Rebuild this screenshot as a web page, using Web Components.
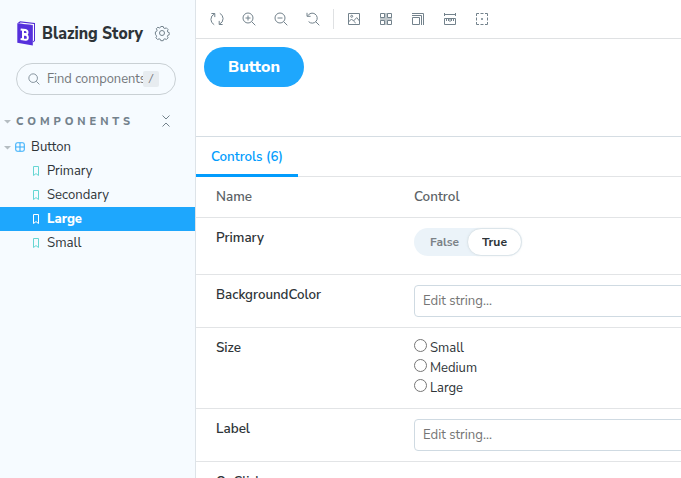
<!DOCTYPE html>
<html lang="en"><head><meta charset="utf-8"><title>Blazing Story</title>
<style>
html,body{margin:0;height:100%;overflow:hidden}
body{font:14px/20px "Nunito Sans",Nunito,Lato,"Open Sans",sans-serif;color:#2e3438;background:#fff}
</style></head><body><story-app></story-app>
<script>
const define=(name,html,setup)=>customElements.define(name,class extends HTMLElement{
  connectedCallback(){
    if(this.shadowRoot)return;
    const t=document.createElement('template');t.innerHTML=html;
    this.attachShadow({mode:'open'}).append(t.content.cloneNode(true));
    if(setup)setup(this,this.shadowRoot);
  }
});

/* Text run condensed or widened to a set width. */
define('fit-text','<style>:host{display:inline-block;white-space:nowrap}span{display:inline-block;transform-origin:0 50%}</style><span><slot></slot></span>',(el,root)=>{
  const s=root.querySelector('span'),w=+el.getAttribute('w');
  const k=w/s.getBoundingClientRect().width;
  el.style.width=w+'px';
  s.style.transform='scaleX('+k+')';
});

const icons={
  sync:'<path d="M4.6 1.8A6.2 6.2 0 0 0 .9 7.4Q1 11 4.2 12.7M9.4 12.2A6.2 6.2 0 0 0 13.1 6.6Q13 3 9.8 1.3M1.4 1.5h3.4v3.6M12.6 12.5H9.2V8.9"/>',
  zoomin:'<circle cx="6" cy="6" r="5"/><path d="M9.7 9.7l3.6 3.6M3.5 6h5M6 3.5v5"/>',
  zoomout:'<circle cx="6" cy="6" r="5"/><path d="M9.7 9.7l3.6 3.6M3.5 6h5"/>',
  reset:'<path d="M1.8 3.8A5 5 0 1 1 2.6 9.6M9.7 9.7l3.6 3.6M1 .8v3.5h3.6"/>',
  image:'<path d="M1.5 1.5h11v11h-11zM1.5 10l3-3 2 2 3.2-3.4L12.5 9M6.5 9l2.2 2"/><circle cx="4.7" cy="4.3" r="1"/>',
  grid:'<path d="M5 1h4v4h4v4H9v4H5V9H1V5h4z" fill="currentColor" opacity=".45" stroke="none"/><path d="M1.5 1.5h4v4h-4zM8.5 1.5h4v4h-4zM1.5 8.5h4v4h-4zM8.5 8.5h4v4h-4z"/>',
  sizes:'<path d="M1.5 5.5h7v7h-7zM1 3.5h9.5V13M1 1.5h11.5V13"/>',
  measure:'<path d="M1.5 1v3M12.5 1v3M1.5 2.5h11M1.5 6.5h11v6h-11zM3.5 7v2M5.5 7v2M7 7v3M8.5 7v2M10.5 7v2"/>',
  outline:'<path d="M1.5 4V1.5H4M5.5 1.5h3M10 1.5h2.5V4M12.5 5.5v3M12.5 10v2.5H10M8.5 12.5h-3M4 12.5H1.5V10M1.5 8.5v-3M6 7h2M7 6v2"/>',
  gear:'<path d="M5.8.5h2.4l.5 1.5 1.2.5 1.4-.7 1.8 1.8-.7 1.4.5 1.2 1.4.5v.8l-.1 1.3-1.3.4-.5 1.1.7 1.5-1.7 1.7-1.5-.7-1.2.5-.5 1.4H5.8l-.5-1.4-1.2-.5-1.5.7-1.7-1.7.7-1.5-.5-1.1L.4 8.2V5.9l1.2-.5.5-1.2-.8-1.5 1.6-1.5 1.4.8 1-.5z"/><circle cx="7" cy="7" r="2.5"/>',
  search:'<circle cx="6" cy="6" r="5"/><path d="M9.7 9.7l3.6 3.6"/>',
  collapse:'<path d="M3.5 1.5L7 5 10.5 1.5M3.5 12.5L7 9l3.5 3.5"/>',
  component:'<rect x="1" y="1" width="12" height="12" rx="2.5"/><path d="M7 1v12M1 7h12"/>',
  bookmark:'<path d="M4.5 2.5h5v9L7 9.6l-2.5 1.9z"/>',
  arrow:'<path d="M0 4h14L7 11z" fill="currentColor" stroke="none"/>'
};
define('ui-icon','<style>:host{display:block;width:14px;height:14px;flex:none;color:#73828c}svg{display:block;width:100%;height:100%;overflow:visible;fill:none;stroke:currentColor;stroke-width:var(--stroke,1)}</style><svg viewBox="0 0 14 14"></svg>',(el,root)=>{
  root.querySelector('svg').innerHTML=icons[el.getAttribute('name')];
});

define('brand-mark',`<style>:host{display:block;width:19px;height:25px}svg{display:block}</style>
<svg width="19" height="25" viewBox="0 0 19 25"><path fill="#512bd4" d="M.4 2.2L3 .3l15 1.6V20l-2.2 1.5V4.2z"/><path fill="#fff" d="M2.2 2.4l1.3-1L17 2.9v16.6l-1.1.9V4z"/><path fill="#5630dc" d="M.3 2.2L15.8 4.2v20.3L.3 21.8z"/><path fill="none" stroke="#fff" stroke-width="2" d="M3.6 8.4l4.9.7q2 .4 2 2.4 0 1.9-2 1.6l-2.3-.3M3.6 18.1l5 .7q2.2.2 2.2-2.2 0-2.3-2.2-2.8l-2.4-.4M6 8.8v9.5"/></svg>`);

define('tree-item',`<style>:host{display:flex;align-items:center;height:24px;padding-left:29px}ui-icon{margin-right:4px;color:#66d6d3}:host([selected]){background:#1ea7fd;color:#fff;font-weight:800}:host([selected]) ui-icon{color:#fff}</style><ui-icon name="bookmark"></ui-icon><slot></slot>`);

define('search-box',`<style>:host{display:flex;box-sizing:border-box;width:160px;height:32px;border:1px solid #c9d0d4;border-radius:16px;align-items:center;padding:0 15px 0 11px;color:#73777b}ui-icon{width:12px;height:12px;margin-right:7px}div{flex:none;width:96px;overflow:hidden;height:20px;line-height:20px}kbd{flex:none;box-sizing:border-box;width:16px;height:16px;background:#e7ecf0;border-radius:2px;text-align:center;font:italic 10px/16px "DejaVu Sans",sans-serif}</style><ui-icon name="search"></ui-icon><div><fit-text w="99">Find components</fit-text></div><kbd>/</kbd>`);

define('side-bar',`<style>
:host{display:block;box-sizing:border-box;width:196px;height:478px;background:#f6fbff;border-right:1px solid #dde3e8}
header{display:flex;align-items:center;height:25px;padding:21px 0 0 17px}
h1{font-size:17px;line-height:24px;font-weight:800;margin:0 12px 0 6px;width:101px}
header ui-icon{margin-bottom:1px}
search-box{margin:17px 0 0 16px}
.group{display:flex;align-items:center;height:24px;margin-top:14px;padding-left:4px;color:#73828c;font-size:11.5px;font-weight:800}
.arrow{width:7px;height:7px;color:#b5bdc2}
.group fit-text{margin-left:5px;letter-spacing:.36em}
.group .c{margin-left:25px}
.component{display:flex;align-items:center;height:24px;margin-top:2px;padding-left:4px}
.component .i{width:10px;height:10px;color:#37aefa;margin:0 6px 0 4px;--stroke:1.5}
</style>
<header><brand-mark></brand-mark><h1><fit-text w="101">Blazing Story</fit-text></h1><ui-icon name="gear"></ui-icon></header>
<search-box></search-box>
<div class="group"><ui-icon class="arrow" name="arrow"></ui-icon><fit-text w="118">COMPONENTS</fit-text><ui-icon class="c" name="collapse"></ui-icon></div>
<div class="component"><ui-icon class="arrow" name="arrow"></ui-icon><ui-icon class="i" name="component"></ui-icon><fit-text w="40">Button</fit-text></div>
<tree-item><fit-text w="45.5">Primary</fit-text></tree-item>
<tree-item><fit-text w="62">Secondary</fit-text></tree-item>
<tree-item selected><fit-text w="35">Large</fit-text></tree-item>
<tree-item><fit-text w="34.5">Small</fit-text></tree-item>`);

define('tool-bar',`<style>:host{display:flex;box-sizing:border-box;height:39px;border-bottom:1px solid #dfe1e3;align-items:center;padding-left:14px;gap:18px}i{width:1px;height:20px;background:#dfe1e3;margin:0 -5px}</style>
<ui-icon name="sync"></ui-icon><ui-icon name="zoomin"></ui-icon><ui-icon name="zoomout"></ui-icon><ui-icon name="reset"></ui-icon><i></i><ui-icon name="image"></ui-icon><ui-icon name="grid"></ui-icon><ui-icon name="sizes"></ui-icon><ui-icon name="measure"></ui-icon><ui-icon name="outline"></ui-icon>`);

define('story-button',`<style>:host{display:block}button{display:block;width:100px;height:40px;padding:0;border:0;border-radius:20px;background:#1ea7fd;color:#fff;font:800 16px/16px "Nunito Sans",Nunito,Lato,sans-serif}</style><button><slot></slot></button>`);

define('control-row',`<style>:host{display:grid;grid-template-columns:198px 1fr;box-sizing:border-box;height:var(--h);border-bottom:1px solid #e2e4e6;padding:10px 0 0 20px}.n{font-weight:650}:host([head]){color:#5c6367}:host([head]) div{font-weight:600}</style><div class="n"><slot name="name"></slot></div><div class="c"><slot></slot></div>`);

define('bool-switch',`<style>:host{display:flex;width:108px;height:28px;border-radius:14px;background:#ebf3f9;font-size:11.5px;line-height:28px;font-weight:700;color:#7b8287}.f{width:37px;padding-left:16px}.t{box-sizing:border-box;width:55px;height:28px;line-height:26px;border:1px solid #dce5ea;border-radius:14px;background:#fff;color:#2e3438;padding-left:14px;box-shadow:0 0 2px #cad6df66}</style><div class="f"><fit-text w="29">False</fit-text></div><div class="t"><fit-text w="25">True</fit-text></div>`);

define('text-field',`<style>:host{display:block;box-sizing:border-box;width:290px;height:32px;border:1px solid #cfdae2;border-radius:4px;padding:5px 8px;color:#757575}</style><fit-text w="69">Edit string...</fit-text>`);

define('radio-option',`<style>:host{display:flex;height:20px;align-items:flex-start}i{box-sizing:border-box;width:13px;height:13px;border:1px solid #767676;border-radius:50%;margin:1px 2.5px 0 0}</style><i></i><slot></slot>`);

define('tab-strip',`<style>:host{display:flex;box-sizing:border-box;height:41px;border-top:1px solid #d5dde3;box-shadow:inset 0 -1px #e2e4e6}div{box-sizing:border-box;width:102px;height:40px;border-bottom:3px solid #029cfd;color:#029cfd;font-weight:650;padding:10px 0 0 15px}</style><div><slot></slot></div>`);

define('story-app',`<style>:host{display:grid;grid-template-columns:196px 1fr;height:478px;overflow:hidden}main{min-width:0;height:478px;overflow:hidden}.canvas{height:97px;box-sizing:border-box;padding:8px}</style>
<side-bar></side-bar><main><tool-bar></tool-bar><section class="canvas"><story-button><fit-text w="52">Button</fit-text></story-button></section>
<tab-strip><fit-text w="72">Controls (6)</fit-text></tab-strip>
<control-row head style="--h:41px"><fit-text slot="name" w="36">Name</fit-text><fit-text w="45.5">Control</fit-text></control-row>
<control-row style="--h:57px"><fit-text slot="name" w="48">Primary</fit-text><bool-switch></bool-switch></control-row>
<control-row style="--h:53px"><fit-text slot="name" w="105">BackgroundColor</fit-text><text-field></text-field></control-row>
<control-row style="--h:81px"><fit-text slot="name" w="25">Size</fit-text><div><radio-option><fit-text w="34">Small</fit-text></radio-option><radio-option><fit-text w="47">Medium</fit-text></radio-option><radio-option><fit-text w="33">Large</fit-text></radio-option></div></control-row>
<control-row style="--h:53px"><fit-text slot="name" w="34">Label</fit-text><text-field></text-field></control-row>
<control-row style="--h:53px"><fit-text slot="name" w="46">OnClick</fit-text></control-row></main>`);
</script></body></html>
